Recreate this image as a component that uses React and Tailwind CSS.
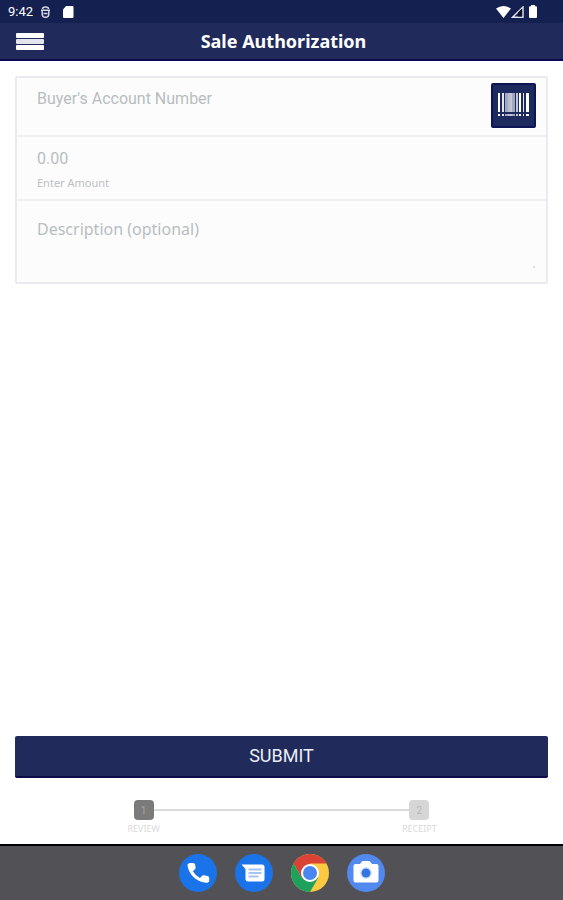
import { useState } from "react";

const steps = [
  { id: 1, label: "REVIEW", box: "bg-[#7b7b7b] text-[#a5a5a5]" },
  { id: 2, label: "RECEIPT", box: "bg-[#d6d6d6] text-[#b8b8b8]" }
];

// x, width and fill of each bar
const bars = [
  [0, 2, "#ffffff"],
  [4, 2, "#e4e6ef"],
  [7, 3, "#a3a8c2"],
  [10, 2, "#b9bccf"],
  [12, 2, "#c3c6d6"],
  [14, 3, "#a3a8c2"],
  [18, 2, "#c3c6d6"],
  [21, 2, "#ffffff"],
  [25, 1, "#e4e6ef"],
  [28, 3, "#ffffff"]
];

function StatusBar() {
  return (
    <div className="flex h-[23px] items-center justify-between bg-[#142150] pr-[25px] pl-2 text-white">
      <div className="flex items-center gap-2">
        <span className="font-['Roboto',sans-serif] text-[13px]">9:42</span>
        <svg width="9" height="12" viewBox="0 0 9 12" fill="none" stroke="#d5d8e4" strokeWidth="1.5">
          <path d="M1.500 3Q1.500 1 4.500 1T7.500 3M0 4.200h9M1.200 4.500v3.500a3.300 3.300 0 0 0 6.600 0V4.500M2.500 7.500h4" />
        </svg>
        <svg className="ml-1" width="12" height="12" viewBox="0 0 12 12" fill="#ffffff">
          <path d="M4 0h6.500q1 0 1 1v10q0 1-1 1h-8.500q-1 0-1-1V3.500z" />
        </svg>
      </div>
      <div className="flex items-center">
        <svg width="15" height="12" viewBox="0 0 15 12" fill="#ffffff">
          <path d="M0 2.600Q7.500-2.400 15 2.600L7.500 12z" />
        </svg>
        <svg width="13" height="12" viewBox="0 0 13 12">
          <path d="M1.500 11.300L12 1v10.300z" fill="none" stroke="#e3e5ee" strokeWidth="1.400" />
          <path d="M7 10.500V6.500l4-4v8z" fill="#0a1029" />
        </svg>
        <svg className="ml-1" width="10" height="13" viewBox="0 0 10 13" fill="#ffffff">
          <path d="M3 0h4v1.300h1q1 0 1 1V12q0 1-1 1H2q-1 0-1-1V2.300q0-1 1-1h1z" />
        </svg>
      </div>
    </div>
  );
}

function Header() {
  return (
    <header className="grid h-[38px] grid-cols-[1fr_auto_1fr] items-center border-b-2 border-[#0b0b55] bg-[#202b5c] pr-3 pl-4">
      <button type="button" aria-label="Menu" className="flex w-7 flex-col gap-px">
        <span className="h-[5px] w-full rounded-[1px] bg-white" />
        <span className="h-[5px] w-full rounded-[1px] bg-[#e3e5ee]" />
        <span className="h-[5px] w-full rounded-[1px] bg-white" />
      </button>
      <h1 className="text-lg font-bold text-white">Sale Authorization</h1>
    </header>
  );
}

function Barcode() {
  return (
    <svg width="31" height="24" viewBox="0 0 31 24">
      {bars.map(([x, w, fill]) => (
        <g key={x} fill={fill}>
          <rect x={x} y="0" width={w} height="19" />
          <rect x={x} y="21" width={w} height="2" />
        </g>
      ))}
    </svg>
  );
}

function Steps() {
  return (
    <ol className="mx-auto mt-[22px] flex w-[55.5%] justify-between">
      {steps.map((step, i) => (
        <li key={step.id} className={i === 0 ? "flex flex-1 items-start" : "flex items-start"}>
          <div className="flex w-5 flex-col items-center gap-1">
            <span
              className={`flex size-5 items-center justify-center rounded-sm font-['Roboto',sans-serif] text-[10px] ${step.box}`}
            >
              {step.id}
            </span>
            <span className="text-[9px] leading-[10px] text-[#d9d9d9]">{step.label}</span>
          </div>
          {i === 0 && <span className="mt-[9px] h-0.5 flex-1 bg-[#dadada]" />}
        </li>
      ))}
    </ol>
  );
}

function PhoneIcon() {
  return (
    <svg width="38" height="38" viewBox="0 0 38 38">
      <circle cx="19" cy="19" r="19" fill="#1a73e8" />
      <path
        d="M8.500 11.500C8.500 10 9.500 9 11 9h3c1.200 0 1.900.7 2.100 1.800l.5 2.500c.1.800-.1 1.400-.6 1.900l-2.100 2a19 19 0 0 0 7 6.800l2-2.100c.5-.5 1.200-.7 1.900-.6l3.600.7c1.100.2 1.800 1 1.800 2.100v2.400c0 1.500-1.100 2.400-2.600 2.200C18 28.200 9.800 21 8.500 11.500z"
        fill="#ffffff"
      />
    </svg>
  );
}

function MessagesIcon() {
  return (
    <svg width="38" height="38" viewBox="0 0 38 38">
      <circle cx="19" cy="19" r="19" fill="#1a73e8" />
      <path d="M6.500 10.500H27q2.500 0 2.500 2.500v12q0 2.500-2.500 2.500H13q-2.500 0-2.500-2.500V15z" fill="#ffffff" />
      <path d="M13.500 15.500h13M13.500 19h13M13.500 22.500h10" stroke="#a5c3f5" strokeWidth="2" />
    </svg>
  );
}

function ChromeIcon() {
  return (
    <svg width="38" height="38" viewBox="0 0 38 38">
      <circle cx="19" cy="19" r="19" fill="#fbc942" />
      <path d="M2.550 9.500A19 19 0 0 1 35.450 9.500H19L10.800 23.700z" fill="#d94235" />
      <path d="M2.550 9.500A19 19 0 0 0 19 38L27.200 23.700H10.800z" fill="#1fa15d" />
      <circle cx="19" cy="19" r="9" fill="#ffffff" />
      <circle cx="19" cy="19" r="7" fill="#4a86f0" />
    </svg>
  );
}

function CameraIcon() {
  return (
    <svg width="38" height="38" viewBox="0 0 38 38">
      <circle cx="19" cy="19" r="19" fill="#5189ee" />
      <path
        d="M8.500 10H13l1.500-2q.6-1 1.600-1h5.800q1 0 1.600 1l1.500 2h4.500q2 0 2 2v14.500q0 2-2 2h-21q-2 0-2-2V12q0-2 2-2z"
        fill="#ffffff"
      />
      <circle cx="19" cy="19" r="6" fill="#d5e3fc" />
      <circle cx="19" cy="19" r="4.500" fill="#3374df" />
    </svg>
  );
}

const apps = [
  { name: "Phone", Icon: PhoneIcon },
  { name: "Messages", Icon: MessagesIcon },
  { name: "Chrome", Icon: ChromeIcon },
  { name: "Camera", Icon: CameraIcon }
];

export default function App() {
  const [account, setAccount] = useState("");
  const [amount, setAmount] = useState("");
  const [description, setDescription] = useState("");

  return (
    <div className="flex min-h-screen flex-col bg-white font-['Noto_Sans',sans-serif]">
      <StatusBar />
      <Header />

      <form className="flex flex-1 flex-col px-[15px] pt-[15px] pb-[10px]" onSubmit={(e) => e.preventDefault()}>
        <div className="divide-y-2 divide-[#eff0f2] rounded-xs border-2 border-[#e9ebef] bg-[#fcfcfd]">
          <div className="flex h-[59px] items-start justify-between pt-[5px] pr-[10px] pl-5">
            <input
              aria-label="Buyer's Account Number"
              placeholder="Buyer's Account Number"
              value={account}
              onChange={(e) => setAccount(e.target.value)}
              className="mt-1 h-6 min-w-0 flex-1 font-['Roboto',sans-serif] text-base outline-none placeholder:text-[#b7bebf]"
            />
            <button
              type="button"
              aria-label="Scan barcode"
              className="flex size-[45px] justify-center rounded-xs border-2 border-[#0f1454] bg-[#1c2a5e] pt-2"
            >
              <Barcode />
            </button>
          </div>
          <div className="flex h-16 flex-col px-5 pt-[10px]">
            <input
              id="amount"
              placeholder="0.00"
              value={amount}
              onChange={(e) => setAmount(e.target.value)}
              className="h-6 font-['Roboto',sans-serif] text-base outline-none placeholder:text-[#b7bebf]"
            />
            <label htmlFor="amount" className="mt-1 self-start text-[11px] leading-4 text-[#bcc0c0]">
              Enter Amount
            </label>
          </div>
          <div className="flex items-end pt-4 pr-[10px] pb-[10px] pl-5">
            <textarea
              aria-label="Description (optional)"
              placeholder="Description (optional)"
              value={description}
              onChange={(e) => setDescription(e.target.value)}
              className="block h-[55px] flex-1 resize-none text-base outline-none placeholder:text-[#b7bebf]"
            />
            <svg width="4" height="7" viewBox="0 0 4 7">
              <path d="M0 3L3 0v3z" fill="#dfe1e3" />
            </svg>
          </div>
        </div>

        <button
          type="submit"
          className="mt-auto h-[42px] rounded-xs border-b-2 border-[#0b0b4a] bg-[#202b5c] font-['Roboto',sans-serif] text-lg text-[#eceef4]"
        >
          SUBMIT
        </button>
        <Steps />
      </form>

      <nav className="flex h-14 items-center justify-center gap-[18px] border-t-2 border-black bg-[#525256]">
        {apps.map(({ name, Icon }) => (
          <button key={name} type="button" aria-label={name}>
            <Icon />
          </button>
        ))}
      </nav>
    </div>
  );
}
